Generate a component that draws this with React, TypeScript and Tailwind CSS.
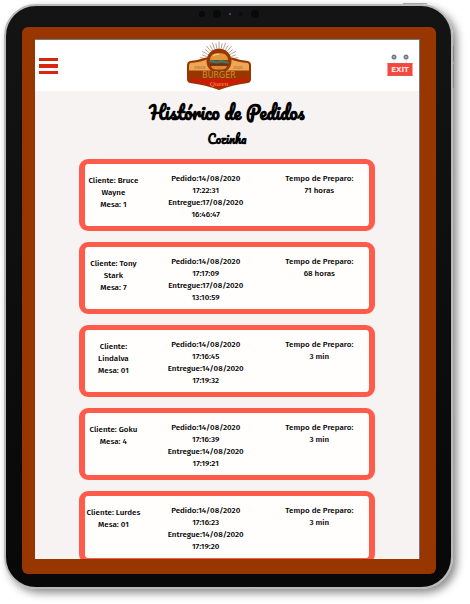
type Order = {
  id: number;
  client: string;
  table: string;
  ordered: [string, string];
  delivered: [string, string];
  time: string;
};

const orders: Order[] = [
  { id: 1, client: "Bruce Wayne", table: "1", ordered: ["14/08/2020", "17:22:31"], delivered: ["17/08/2020", "16:46:47"], time: "71 horas" },
  { id: 2, client: "Tony Stark", table: "7", ordered: ["14/08/2020", "17:17:09"], delivered: ["17/08/2020", "13:10:59"], time: "68 horas" },
  { id: 3, client: "Lindalva", table: "01", ordered: ["14/08/2020", "17:16:45"], delivered: ["14/08/2020", "17:19:32"], time: "3 min" },
  { id: 4, client: "Goku", table: "4", ordered: ["14/08/2020", "17:16:39"], delivered: ["14/08/2020", "17:19:21"], time: "3 min" },
  { id: 5, client: "Lurdes", table: "01", ordered: ["14/08/2020", "17:16:23"], delivered: ["14/08/2020", "17:19:20"], time: "3 min" },
];

const rays = Array.from({ length: 19 }, (_, i) => -180 + i * 10);

function Logo() {
  return (
    <svg viewBox="0 0 66 50" className="h-[50px] w-[66px]" role="img" aria-label="Burger Queen">
      <g stroke="#a98672" strokeWidth="0.8">
        {rays.map((deg, i) => {
          const a = (deg * Math.PI) / 180;
          const end = i % 2 ? 19.5 : 18;
          return (
            <line
              key={deg}
              x1={33 + 13 * Math.cos(a)}
              y1={20 + 13 * Math.sin(a)}
              x2={33 + end * Math.cos(a)}
              y2={20 + end * Math.sin(a)}
            />
          );
        })}
      </g>
      <path d="M4 20 Q13 19 20 16.500 H46 Q53 19 62 20 Q65 21 65 24 V38 Q65 41 62 42 Q46 44 33 49 Q20 44 4 42 Q1 41 1 38 V24 Q1 21 4 20Z" fill="#983600" />
      <path d="M4 22 Q14 21 21 18.500 H45 Q52 21 62 22 L63 24 V29.500 H3 V24Z" fill="#eda653" />
      <path d="M11 38 H55 L62 37 L62 40 Q45 42 33 47.500 Q21 42 4 40 L4 37Z" fill="#cf1904" />
      <circle cx="33" cy="20" r="12.500" fill="#983600" />
      <path d="M24 19 Q24 12 33 12 Q42 12 42 19Z" fill="#e59539" />
      <path d="M27 15 Q29 13 33 13.500" fill="none" stroke="#ffd083" strokeWidth="1.200" />
      <path d="M24 19.500 H42 L41 22 H25Z" fill="#54682c" />
      <path d="M23.500 21 Q26 19 28.500 21 T33 21 T38 21 T42.500 21" fill="none" stroke="#35808a" strokeWidth="1.500" />
      <rect x="24" y="22.500" width="18" height="2" rx="1" fill="#653126" />
      <path d="M25 25 H41 Q40 28.500 36 28.500 H30 Q26 28.500 25 25Z" fill="#dc892f" />
      <text x="14" y="27.500" textAnchor="middle" fontSize="4" fill="#a8692f" fontFamily="Lato, sans-serif">SINCE</text>
      <text x="52" y="27.500" textAnchor="middle" fontSize="4" fill="#a8692f" fontFamily="Lato, sans-serif">2020</text>
      <text x="33" y="36.500" textAnchor="middle" fontSize="8" fill="#c98f3c" fontFamily="DejaVu Sans, sans-serif">BURGER</text>
      <text x="33" y="44.500" textAnchor="middle" fontSize="7" fontStyle="italic" fill="#f0a05a" fontFamily="Liberation Serif, serif">Queen</text>
    </svg>
  );
}

function ExitSign() {
  return (
    <svg viewBox="0 0 26 23" className="h-[23px] w-[26px]" aria-hidden="true">
      <path d="M7 3 V9 M19 3 V9" stroke="#d8dae2" strokeWidth="1" />
      <circle cx="7" cy="3" r="2.500" fill="#737a90" />
      <circle cx="19" cy="3" r="2.500" fill="#737a90" />
      <circle cx="7" cy="3" r="0.900" fill="#b9bdca" />
      <circle cx="19" cy="3" r="0.900" fill="#b9bdca" />
      <rect x="0.500" y="9" width="25" height="13" fill="#f4473e" />
      <path d="M0.500 9.500 H25.500 M0.500 21.500 H25.500" stroke="#e0584d" />
      <text x="13" y="18" textAnchor="middle" fontSize="7" fontWeight="900" fill="#ffe9e6" fontFamily="DejaVu Sans, sans-serif">EXIT</text>
    </svg>
  );
}

function OrderCard({ order }: { order: Order }) {
  return (
    <li className="grid h-[72px] shrink-0 grid-cols-[20fr_45fr_35fr] rounded-[9px] border-x-[6px] border-y-[5px] border-[#ff5b4a] bg-[#fffefd] text-center">
      <div className="pt-[11px]">
        <p>{`Cliente: ${order.client}`}</p>
        <p>{`Mesa: ${order.table}`}</p>
      </div>
      <div className="px-6 pt-[9px]">
        <p>{`Pedido:${order.ordered.join(" ")}`}</p>
        <p>{`Entregue:${order.delivered.join(" ")}`}</p>
      </div>
      <div className="pt-[9px]">
        <p>Tempo de Preparo:</p>
        <p>{order.time}</p>
      </div>
    </li>
  );
}

export default function App() {
  return (
    <div className="h-screen overflow-hidden bg-white pt-1 pr-[17px] pb-[15px] pl-1 font-['Fira_Sans','Noto_Sans',sans-serif] text-black">
      <div className="relative h-full rounded-[32px] border-2 border-[#b9bbba] bg-linear-to-b from-[#141414] to-[#080808] pt-[21px] pr-[15px] pb-[13px] pl-4 shadow-[4px_4px_8px_rgba(0,0,0,0.45)]">
        <span className="absolute -top-[3px] right-6 h-px w-6 bg-[#a5a7a6]" />
        <span className="absolute top-10 -right-[3px] h-4 w-px bg-[#858786]" />
        <span className="absolute top-[58px] -right-[3px] h-6 w-px bg-[#858786]" />
        <div className="absolute inset-x-0 top-1 flex items-center justify-center gap-2">
          <span className="size-[6px] rounded-full bg-[#08090c]" />
          <span className="size-2 rounded-full bg-[#08090c]" />
          <span className="size-[2px] bg-[#294d83]" />
          <span className="size-1 rounded-full bg-[#0b0b0d]" />
          <span className="size-2 rounded-full bg-[#08090c]" />
        </div>

        <div className="flex h-full flex-col rounded-md bg-[#983600] pt-3 pr-4 pb-[15px] pl-[13px]">
          <div className="flex min-h-0 flex-1 flex-col overflow-hidden border-t border-r border-[#777] bg-[#f7f3f3]">
            <header className="grid h-[51px] shrink-0 grid-cols-[20px_1fr_35px] items-center bg-white pr-[6px] pl-1">
              <button type="button" aria-label="Menu" className="flex w-[19px] flex-col gap-[3px]">
                <span className="h-[3px] w-full bg-[#d92612]" />
                <span className="h-1 w-full bg-[#d92612]" />
                <span className="h-[3px] w-full bg-[#d92612]" />
              </button>
              <div className="justify-self-center">
                <Logo />
              </div>
              <button type="button" aria-label="Sair" className="justify-self-end">
                <ExitSign />
              </button>
            </header>

            <main className="flex min-h-0 flex-1 flex-col">
              <h1 className="pt-2 text-center font-['Pacifico','Liberation_Serif',serif] text-[18px] leading-[28px] font-bold">
                Histórico de Pedidos
              </h1>
              <h2 className="text-center font-['Pacifico','Liberation_Serif',serif] text-[12px] leading-[24px] font-bold">
                Cozinha
              </h2>
              <ul className="mx-11 mt-2 flex min-h-0 flex-1 flex-col gap-[11px] text-[8px] leading-[12px] font-medium">
                {orders.map((order) => (
                  <OrderCard key={order.id} order={order} />
                ))}
              </ul>
            </main>
          </div>
        </div>
      </div>
    </div>
  );
}
